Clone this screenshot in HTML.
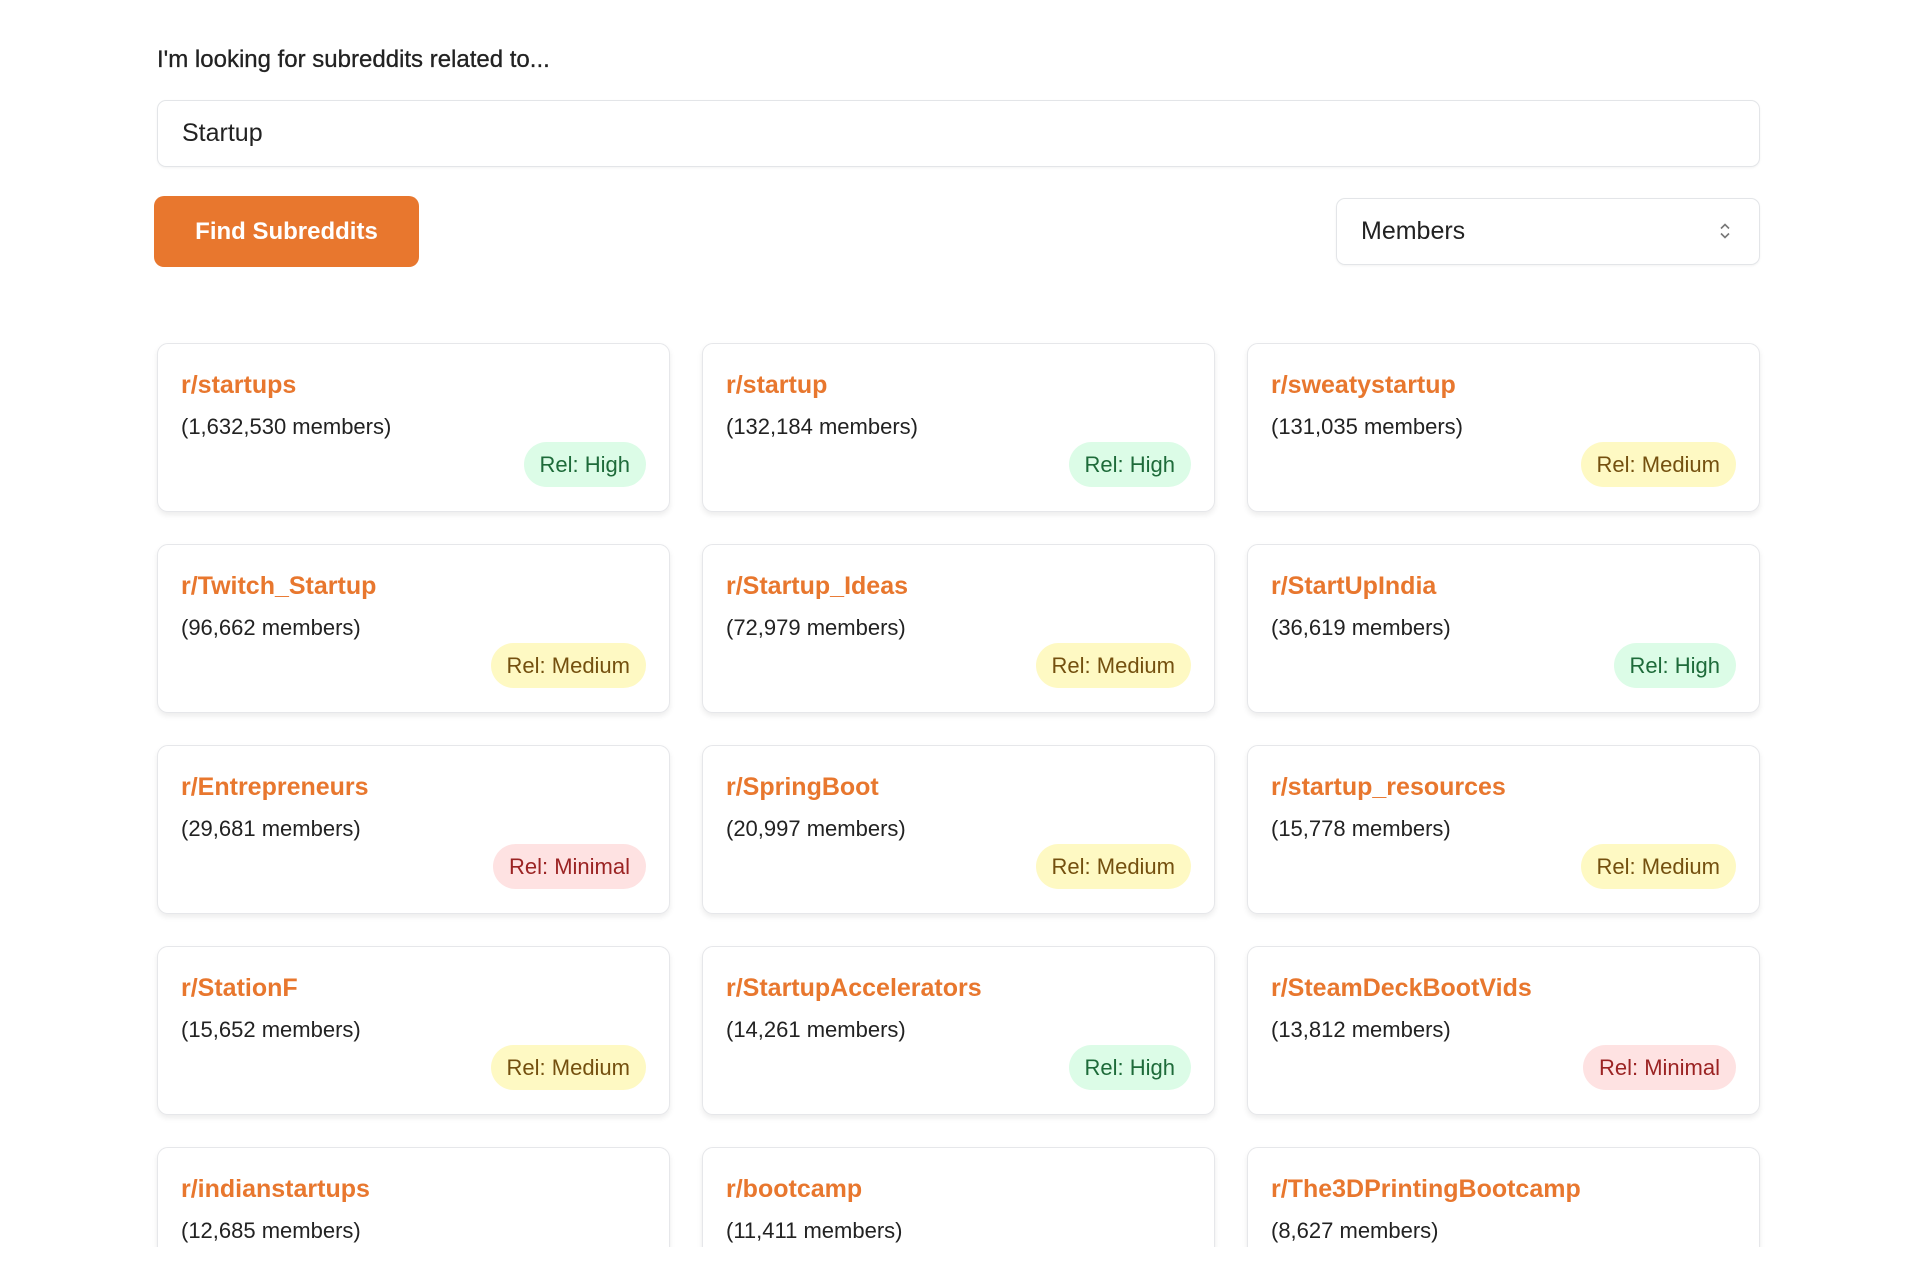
<!DOCTYPE html>
<html><head><meta charset="utf-8"><style>
*{box-sizing:border-box;margin:0;padding:0}
body{width:1920px;height:1280px;background:#fff;font-family:"Liberation Sans",Arial,sans-serif;position:relative;overflow:hidden;color:#1f1f1f}
.lbl{position:absolute;left:157px;top:46px;font-size:24px;color:#222;-webkit-text-stroke:0.3px #222}
.inp{position:absolute;left:157px;top:100px;width:1603px;height:67px;border:1.5px solid #e3e5e8;border-radius:9px;font-size:25px;padding-left:24px;line-height:64px;color:#222;box-shadow:0 1px 2px rgba(0,0,0,.05)}
.btn{position:absolute;left:154px;top:196px;width:265px;height:71px;background:#E8772E;border-radius:10px;color:#fff;font-size:24px;font-weight:bold;text-align:center;line-height:71px}
.sel{position:absolute;left:1336px;top:198px;width:424px;height:67px;border:1.5px solid #e3e5e8;border-radius:9px;font-size:25px;padding-left:24px;line-height:64px;color:#222;box-shadow:0 1px 2px rgba(0,0,0,.05)}
.sel svg{position:absolute;right:28px;top:23px}
.clip{position:absolute;left:0;top:0;width:1920px;height:1247px;overflow:hidden}
.card{position:absolute;width:513px;height:169px;border:1.5px solid #e6e7ea;border-radius:11px;box-shadow:0 3px 6px rgba(0,0,0,.08);background:#fff}
.t{position:absolute;left:23px;top:27px;font-size:25px;font-weight:bold;color:#E8772E}
.m{position:absolute;left:23px;top:70px;font-size:22px;color:#222}
.b{position:absolute;right:23px;top:98px;height:45px;line-height:45px;padding:0 16px;border-radius:23px;font-size:22px}
.H{background:#dcfce7;color:#1e6b3a}.M{background:#fef9c3;color:#74500f}.N{background:#fee2e2;color:#9b2323}
</style></head><body>
<div class="lbl">I'm looking for subreddits related to...</div>
<div class="inp">Startup</div>
<div class="btn">Find Subreddits</div>
<div class="sel">Members<svg width="12" height="18" viewBox="0 0 12 18"><path d="M2 6.5L6 2.5L10 6.5M2 11.5L6 15.5L10 11.5" fill="none" stroke="#777" stroke-width="1.6"/></svg></div>
<div class="clip">
<div class="card" style="left:157px;top:343px"><div class="t">r/startups</div><div class="m">(1,632,530 members)</div><div class="b H">Rel: High</div></div>
<div class="card" style="left:702px;top:343px"><div class="t">r/startup</div><div class="m">(132,184 members)</div><div class="b H">Rel: High</div></div>
<div class="card" style="left:1247px;top:343px"><div class="t">r/sweatystartup</div><div class="m">(131,035 members)</div><div class="b M">Rel: Medium</div></div>
<div class="card" style="left:157px;top:544px"><div class="t">r/Twitch_Startup</div><div class="m">(96,662 members)</div><div class="b M">Rel: Medium</div></div>
<div class="card" style="left:702px;top:544px"><div class="t">r/Startup_Ideas</div><div class="m">(72,979 members)</div><div class="b M">Rel: Medium</div></div>
<div class="card" style="left:1247px;top:544px"><div class="t">r/StartUpIndia</div><div class="m">(36,619 members)</div><div class="b H">Rel: High</div></div>
<div class="card" style="left:157px;top:745px"><div class="t">r/Entrepreneurs</div><div class="m">(29,681 members)</div><div class="b N">Rel: Minimal</div></div>
<div class="card" style="left:702px;top:745px"><div class="t">r/SpringBoot</div><div class="m">(20,997 members)</div><div class="b M">Rel: Medium</div></div>
<div class="card" style="left:1247px;top:745px"><div class="t">r/startup_resources</div><div class="m">(15,778 members)</div><div class="b M">Rel: Medium</div></div>
<div class="card" style="left:157px;top:946px"><div class="t">r/StationF</div><div class="m">(15,652 members)</div><div class="b M">Rel: Medium</div></div>
<div class="card" style="left:702px;top:946px"><div class="t">r/StartupAccelerators</div><div class="m">(14,261 members)</div><div class="b H">Rel: High</div></div>
<div class="card" style="left:1247px;top:946px"><div class="t">r/SteamDeckBootVids</div><div class="m">(13,812 members)</div><div class="b N">Rel: Minimal</div></div>
<div class="card" style="left:157px;top:1147px"><div class="t">r/indianstartups</div><div class="m">(12,685 members)</div></div>
<div class="card" style="left:702px;top:1147px"><div class="t">r/bootcamp</div><div class="m">(11,411 members)</div></div>
<div class="card" style="left:1247px;top:1147px"><div class="t">r/The3DPrintingBootcamp</div><div class="m">(8,627 members)</div></div>
</div>
</body></html>
